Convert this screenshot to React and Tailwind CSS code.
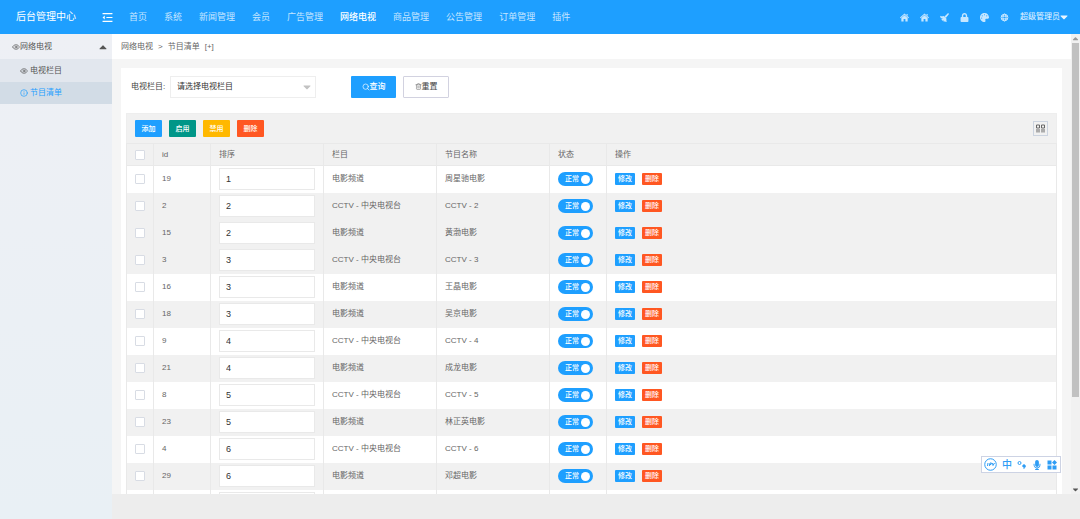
import React from "react";
import {
  FaCaretDown,
  FaCaretUp,
  FaLock,
  FaMicrophone,
  FaPalette,
} from "react-icons/fa";
import { LuEye, LuInfo, LuSearch, LuTrash2 } from "react-icons/lu";

const HomeIcon = (props) => (
  <svg viewBox="0 0 20 20" fill="currentColor" aria-hidden="true" {...props}>
    <path d="M10 1l10 9-1.500 1.500L10 4 1.500 11.500 0 10z" />
    <path d="M14.500 2H17v4.500l-2.500-2.200z" />
    <path d="M10 5l7 6V19h-5v-5.500H8V19H3v-8z" />
  </svg>
);

const BroomIcon = (props) => (
  <svg viewBox="0 0 20 20" fill="currentColor" aria-hidden="true" {...props}>
    <path d="M18 0l2 2-7 9-3-3z" />
    <path d="M0 6c3 1.500 5.500 1.500 8.500.5l6 6C14 14 14 16 15 20c-3 0-6-.5-8-2l1.500-2.500L5 17c-1-1-1.500-2-2-3.500L7 11l-5 .5C1 10 .5 8 0 6z" />
  </svg>
);

const GlobeIcon = (props) => (
  <svg
    viewBox="0 0 20 20"
    fill="none"
    stroke="currentColor"
    strokeWidth="2"
    aria-hidden="true"
    {...props}
  >
    <circle cx="10" cy="10" r="7.500" />
    <ellipse cx="10" cy="10" rx="3.500" ry="7.500" />
    <path d="M3 7h14M3 13h14" />
  </svg>
);

const menus = [
  "首页",
  "系统",
  "新闻管理",
  "会员",
  "广告管理",
  "网络电视",
  "商品管理",
  "公告管理",
  "订单管理",
  "插件",
];

const tools = [
  { label: "后台首页", icon: HomeIcon },
  { label: "网站首页", icon: HomeIcon },
  { label: "清除缓存", icon: BroomIcon },
  { label: "锁屏", icon: FaLock },
  { label: "主题", icon: FaPalette },
  { label: "语言", icon: GlobeIcon },
];

const actions = [
  { label: "添加", color: "bg-[#1e9fff]" },
  { label: "启用", color: "bg-[#009688]" },
  { label: "禁用", color: "bg-[#ffb800]" },
  { label: "删除", color: "bg-[#ff5722]" },
];

const MOVIE = "电影频道";
const CCTV = "CCTV - 中央电视台";

const rows = [
  { id: 19, sort: 1, column: MOVIE, name: "周星驰电影" },
  { id: 2, sort: 2, column: CCTV, name: "CCTV - 2", shaded: true },
  { id: 15, sort: 2, column: MOVIE, name: "黄渤电影", shaded: true },
  { id: 3, sort: 3, column: CCTV, name: "CCTV - 3", shaded: true },
  { id: 16, sort: 3, column: MOVIE, name: "王晶电影" },
  { id: 18, sort: 3, column: MOVIE, name: "吴京电影", shaded: true },
  { id: 9, sort: 4, column: CCTV, name: "CCTV - 4" },
  { id: 21, sort: 4, column: MOVIE, name: "成龙电影", shaded: true },
  { id: 8, sort: 5, column: CCTV, name: "CCTV - 5" },
  { id: 23, sort: 5, column: MOVIE, name: "林正英电影", shaded: true },
  { id: 4, sort: 6, column: CCTV, name: "CCTV - 6" },
  { id: 29, sort: 6, column: MOVIE, name: "邓超电影", shaded: true },
];

const Header = () => (
  <header className="flex h-[34px] shrink-0 items-center bg-[#1e9fff] text-[9px] text-white/75">
    <h1 className="w-24 shrink-0 pl-4 text-[10px] text-white">后台管理中心</h1>
    <button type="button" aria-label="收起菜单" className="ml-1.5 text-white">
      <svg
        viewBox="0 0 20 20"
        className="h-[11px] w-[11px]"
        fill="none"
        stroke="currentColor"
        strokeWidth="2"
        aria-hidden="true"
      >
        <path d="M1 3h18M8 10h11M1 17h18" />
        <path d="M5 6.500v7L1 10z" fill="currentColor" stroke="none" />
      </svg>
    </button>
    <nav className="ml-4 flex gap-[17px] whitespace-nowrap">
      {menus.map((menu) => (
        <a
          key={menu}
          href="#"
          className={menu === "网络电视" ? "font-medium text-white" : ""}
        >
          {menu}
        </a>
      ))}
    </nav>
    <div className="ml-auto flex items-center gap-[11px] pr-3">
      {tools.map(({ label, icon: Icon }) => (
        <button key={label} type="button" aria-label={label}>
          <Icon className="h-[9px] w-[9px]" />
        </button>
      ))}
      <button type="button" className="flex items-center text-[8px] text-white/90">
        超级管理员
        <FaCaretDown className="h-3 w-2" />
      </button>
    </div>
  </header>
);

const Sidebar = () => (
  <aside className="w-28 shrink-0 bg-linear-to-b from-[#eef0f5] to-[#e9f0f5] text-[8px] text-[#555]">
    <button
      type="button"
      className="flex h-[25px] w-full items-center pr-1 pl-3"
    >
      <LuEye className="h-2 w-2" />
      网络电视
      <FaCaretUp className="ml-auto h-3 w-2.5" />
    </button>
    <a href="#" className="flex h-[23px] items-center gap-0.5 bg-[#e2e7ee] pl-5">
      <LuEye className="h-2 w-2" />
      电视栏目
    </a>
    <a
      href="#"
      className="flex h-[22px] items-center gap-0.5 bg-[#d2dce6] pl-5 text-[#1e9fff]"
    >
      <LuInfo className="h-2 w-2" />
      节目清单
    </a>
  </aside>
);

const SearchForm = () => (
  <form className="flex h-[45px] items-center pb-2 pl-2.5 text-[8px]">
    <label htmlFor="column" className="w-[39px] text-[#444]">
      电视栏目:
    </label>
    <div className="relative w-[146px]">
      <select
        id="column"
        className="h-[22px] w-full appearance-none border border-[#eee] bg-white pl-1.5 text-[#333]"
      >
        <option>请选择电视栏目</option>
      </select>
      <FaCaretDown className="pointer-events-none absolute top-[5px] right-1 h-3 w-2.5 text-[#c2c2c2]" />
    </div>
    <button
      type="button"
      className="ml-[35px] flex h-[22px] w-[45px] items-center justify-center rounded-[1px] bg-[#1e9fff] font-medium text-white"
    >
      <LuSearch className="h-2 w-2" />
      查询
    </button>
    <button
      type="reset"
      className="ml-[7px] flex h-[22px] w-[46px] items-center justify-center rounded-[1px] border border-[#d2d2e0] bg-white text-[#444]"
    >
      <LuTrash2 className="h-[7px] w-[7px] text-[#777]" />
      重置
    </button>
  </form>
);

const Toolbar = () => (
  <div className="flex h-[30px] items-center gap-[7px] border border-b-0 border-[#eee] bg-[#f1f1f1] px-2">
    {actions.map((action) => (
      <button
        key={action.label}
        type="button"
        className={`h-[17px] w-[27px] rounded-[1px] text-[7px] font-medium text-white ${action.color}`}
      >
        {action.label}
      </button>
    ))}
    <button
      type="button"
      aria-label="筛选列"
      className="ml-auto flex h-[15px] w-[15px] items-center justify-center border border-[#ccd4e0] text-[#666]"
    >
      <svg
        viewBox="0 0 18 18"
        className="h-[9px] w-[9px]"
        fill="none"
        stroke="currentColor"
        strokeWidth="2"
        aria-hidden="true"
      >
        <path d="M1 2h6v6H1zM11 2h6v6h-6zM2 10v7M6 10v7M12 10v7M16 10v7" />
      </svg>
    </button>
  </div>
);

const Check = ({ label }) => (
  <input
    type="checkbox"
    aria-label={label}
    className="mx-auto block h-2.5 w-2.5 appearance-none rounded-[1px] border border-[#d8dce4] bg-white"
  />
);

const SortInput = ({ value }) => (
  <input
    type="text"
    aria-label="排序"
    defaultValue={value}
    className="block h-[22px] w-full border border-[#e9e9e9] bg-white px-1.5 text-[9px] text-[#333]"
  />
);

const ProgramTable = () => (
  <table className="w-full table-fixed border-collapse text-left text-[8px] text-[#666]">
    <colgroup>
      <col className="w-[27px]" />
      <col className="w-[57px]" />
      <col className="w-[113px]" />
      <col className="w-[113px]" />
      <col className="w-[113px]" />
      <col className="w-[57px]" />
      <col />
    </colgroup>
    <thead>
      <tr className="h-[22px] bg-[#f1f1f1] *:border *:border-[#e9e9e9] *:font-normal">
        <th>
          <Check label="全选" />
        </th>
        <th className="px-2">id</th>
        <th className="px-2">排序</th>
        <th className="px-2">栏目</th>
        <th className="px-2">节目名称</th>
        <th className="px-2">状态</th>
        <th className="px-2">操作</th>
      </tr>
    </thead>
    <tbody>
      {rows.map((row) => (
        <tr
          key={row.id}
          className={`h-[27px] *:border-x *:border-[#e9e9e9] ${row.shaded ? "bg-[#f1f1f1]" : "bg-white"}`}
        >
          <td>
            <Check label={`选择 ${row.id}`} />
          </td>
          <td className="px-2">{row.id}</td>
          <td className="px-2">
            <SortInput value={row.sort} />
          </td>
          <td className="px-2">{row.column}</td>
          <td className="px-2">{row.name}</td>
          <td className="px-2">
            <button
              type="button"
              role="switch"
              aria-checked="true"
              className="flex h-3.5 w-[35px] items-center justify-between rounded-full bg-[#1e9fff] pr-[3px] pl-[7px] text-[7px] font-medium text-white"
            >
              正常
              <span className="h-[9px] w-[9px] rounded-full bg-white" />
            </button>
          </td>
          <td className="px-2">
            <div className="flex gap-[7px] text-[7px] font-medium text-white">
              <button type="button" className="h-3 w-5 rounded-[1px] bg-[#1e9fff]">
                修改
              </button>
              <button type="button" className="h-3 w-5 rounded-[1px] bg-[#ff5722]">
                删除
              </button>
            </div>
          </td>
        </tr>
      ))}
      <tr className="h-[27px] bg-white *:border-x *:border-[#e9e9e9]">
        <td />
        <td />
        <td className="px-2">
          <SortInput value="" />
        </td>
        <td />
        <td />
        <td />
        <td />
      </tr>
    </tbody>
  </table>
);

const ScrollTrack = () => (
  <div className="flex w-[9px] shrink-0 flex-col items-center bg-[#f1f1f1]" aria-hidden="true">
    <FaCaretUp className="h-[9px] w-[7px] text-[#999]" />
    <div className="w-[7px] flex-[4] bg-[#c1c1c1]" />
    <div className="flex-1" />
    <FaCaretDown className="h-[9px] w-[7px] text-[#555]" />
  </div>
);

const InputBar = () => (
  <div className="absolute right-[19px] bottom-[21px] flex h-[17px] items-center gap-[5px] border border-[#cdd3e4] bg-white pr-[3px] pl-0.5 text-[#2e9df5]">
    <svg viewBox="0 0 26 26" className="h-[13px] w-[13px]" fill="none" stroke="currentColor" strokeWidth="2" aria-hidden="true">
      <circle cx="13" cy="13" r="11.500" />
      <path d="M7 16l1-6M11 16l1-6h3l-1 3h-3M17 10l1 5 3-5" />
    </svg>
    <span className="w-2.5 text-center text-[10px] font-medium">中</span>
    <svg viewBox="0 0 20 20" className="h-2.5 w-2.5" fill="none" stroke="currentColor" strokeWidth="2" aria-hidden="true">
      <circle cx="5" cy="6" r="3" />
      <circle cx="14" cy="12" r="2.500" fill="currentColor" />
      <path d="M16 12c0 3-1 4-3 6" />
    </svg>
    <FaMicrophone className="h-2.5 w-2.5" />
    <svg viewBox="0 0 20 20" className="h-2.5 w-2.5" fill="currentColor" aria-hidden="true">
      <path d="M1 1h8v8H1zM1 11h8v8H1zM11 11h8v8h-8z" />
      <path d="M15 0l5 5-5 5-5-5z" />
    </svg>
  </div>
);

const App = () => {
  return (
    <div className="flex h-screen flex-col overflow-hidden bg-[#ededed] font-['Liberation_Sans','Noto_Sans_CJK_SC',sans-serif] leading-3">
      <Header />
      <div className="flex min-h-0 flex-1">
        <Sidebar />
        <div className="flex min-w-0 flex-1 flex-col">
          <div className="relative flex min-h-0 flex-1">
            <main className="min-w-0 flex-1 overflow-hidden bg-[#f5f5f5]">
              <nav
                aria-label="breadcrumb"
                className="flex h-[25px] items-center gap-[5px] bg-white pl-[9px] text-[8px] text-[#666]"
              >
                <a href="#">网络电视</a>
                <span>&gt;</span>
                <a href="#">节目清单</a>
                <a href="#">[+]</a>
              </nav>
              <div className="mt-[9px] mr-[9px] ml-[9px] bg-white">
                <SearchForm />
                <div className="px-[5px]">
                  <Toolbar />
                  <ProgramTable />
                </div>
              </div>
            </main>
            <ScrollTrack />
            <InputBar />
          </div>
          <footer className="h-[25px] shrink-0" />
        </div>
      </div>
    </div>
  );
};

export default App;
